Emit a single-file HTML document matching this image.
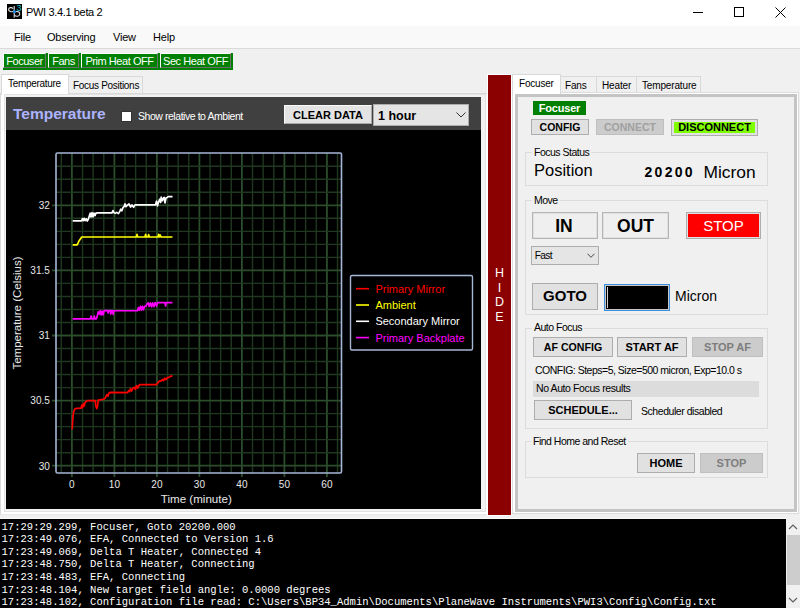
<!DOCTYPE html>
<html><head><meta charset="utf-8">
<style>
*{box-sizing:border-box;margin:0;padding:0}
html,body{width:800px;height:608px;overflow:hidden;background:#f0f0f0;font-family:"Liberation Sans",sans-serif;color:#000}
.a{position:absolute}
.t{position:absolute;white-space:pre;line-height:1}
.btn{position:absolute;background:#e1e1e1;border:1px solid #adadad}
.tbtn{position:absolute;background:#008000;top:53px;height:17px}
.tbtn i{position:absolute;left:0;top:0;right:2px;bottom:2px;border-top:1px solid #fff;border-left:1px solid #fff;border-right:1px solid #6d6d6d;border-bottom:1px solid #6d6d6d}
.tbtn span{position:absolute;top:3.3px;left:0;right:2px;text-align:center;color:#fff;font-size:11px;line-height:1;white-space:pre;letter-spacing:-0.45px}
.grp{position:absolute;border:1px solid #dcdcdc}
.gl{position:absolute;background:#f0f0f0;font-size:10.5px;line-height:1;padding:0 2px;white-space:pre;letter-spacing:-0.5px}
.c{text-align:center}
</style></head><body>
<!-- title bar -->
<div class="a" style="left:0;top:0;width:800px;height:26px;background:#fff"></div>
<svg class="a" style="left:7px;top:4px" width="15" height="15" viewBox="0 0 15 15">
<rect x="0" y="0" width="15" height="15" fill="#000"/>
<path d="M7.2 2 V13.8" stroke="#e0e0e0" stroke-width="1.1" fill="none"/>
<path d="M7.2 6.8 C6 8.2, 1.6 8.2, 1.6 5.6 C1.6 3.3, 4.6 3, 6.2 4.6" stroke="#e0e0e0" stroke-width="1.1" fill="none"/>
<path d="M7.4 8.4 C9 7, 13 7.3, 12.8 10 C12.6 12.6, 9 12.8, 7.4 11.2" stroke="#e0e0e0" stroke-width="1.1" fill="none"/>
<path d="M7.4 5.6 L9.3 7.5 L7.4 9.4 L5.5 7.5 Z" fill="#1f86e0"/>
<text x="9.5" y="6.8" font-size="9" fill="#20c8d8" font-family="Liberation Sans">3</text>
</svg>
<div class="t" style="left:26px;top:7.2px;font-size:11px;letter-spacing:-0.35px;color:#000">PWI 3.4.1 beta 2</div>
<div class="a" style="left:693px;top:12px;width:10px;height:1px;background:#000"></div>
<div class="a" style="left:734px;top:7px;width:10px;height:10px;border:1px solid #000"></div>
<svg class="a" style="left:775px;top:7px" width="11" height="11" viewBox="0 0 11 11"><path d="M0.5 0.5 L10.5 10.5 M10.5 0.5 L0.5 10.5" stroke="#000" stroke-width="1"/></svg>
<!-- menu bar -->
<div class="a" style="left:0;top:26px;width:800px;height:23px;background:#f9f9f9;border-bottom:1px solid #dadada"></div>
<div class="t" style="left:14px;top:31.5px;font-size:11px;letter-spacing:-0.2px">File</div>
<div class="t" style="left:47px;top:31.5px;font-size:11px;letter-spacing:-0.2px">Observing</div>
<div class="t" style="left:113px;top:31.5px;font-size:11px;letter-spacing:-0.2px">View</div>
<div class="t" style="left:153px;top:31.5px;font-size:11px;letter-spacing:-0.2px">Help</div>
<!-- toolbar -->
<div class="tbtn" style="left:3px;width:45px"><i></i><span>Focuser</span></div>
<div class="tbtn" style="left:48px;width:33px"><i></i><span>Fans</span></div>
<div class="tbtn" style="left:81px;width:79px"><i></i><span>Prim Heat OFF</span></div>
<div class="tbtn" style="left:160px;width:73px"><i></i><span>Sec Heat OFF</span></div>

<!-- left tab control -->
<div class="a" style="left:68px;top:76px;width:75px;height:18px;background:#f0f0f0;border:1px solid #d9d9d9;border-bottom:none"></div>
<div class="t" style="left:73px;top:81px;font-size:10px;letter-spacing:-0.3px">Focus Positions</div>
<div class="a" style="left:0;top:93px;width:488px;height:422px;background:#fff;border-left:1px solid #d9d9d9;border-top:1px solid #d9d9d9;border-bottom:1px solid #e8e8e8"></div>
<div class="a" style="left:1px;top:74px;width:68px;height:21px;background:#fff;border:1px solid #d9d9d9;border-bottom:none"></div>
<div class="t" style="left:8px;top:79px;font-size:10px;letter-spacing:-0.3px">Temperature</div>
<div class="a" style="left:4px;top:94px;width:482px;height:418px;border:1px solid #e2e2e2;background:#f2f2f2"></div>
<div class="a" style="left:6px;top:97px;width:475px;height:33px;background:#404040"></div>
<div class="a" style="left:6px;top:130px;width:475px;height:379px;background:#000"></div>
<div class="t" style="left:13px;top:106.2px;font-size:15.5px;font-weight:bold;color:#acb4ff;letter-spacing:0px">Temperature</div>
<div class="a" style="left:121px;top:111px;width:11px;height:11px;background:#fff;border:1px solid #333"></div>
<div class="t" style="left:138px;top:111.4px;font-size:10.5px;letter-spacing:-0.45px;color:#fff">Show relative to Ambient</div>
<div class="btn" style="left:284px;top:105px;width:88px;height:19px;background:#e3e3e3;border-color:#fafafa #a8a8a8 #a8a8a8 #fafafa"></div>
<div class="t" style="left:284px;top:110px;width:88px;text-align:center;font-size:11px;font-weight:bold">CLEAR DATA</div>
<div class="a" style="left:373px;top:104px;width:96px;height:22px;background:#e5e5e5;border:1px solid #adadad"></div>
<div class="t" style="left:378px;top:110px;font-size:12.5px;font-weight:bold">1 hour</div>
<svg class="a" style="left:456px;top:112px" width="10" height="6" viewBox="0 0 10 6"><path d="M0.5 0.5 L5 5 L9.5 0.5" stroke="#333" stroke-width="1" fill="none"/></svg>

<!-- HIDE bar -->
<div class="a" style="left:487px;top:74px;width:25px;height:442px;background:#fff"></div>
<div class="a" style="left:488px;top:75px;width:23px;height:440px;background:#8b0000"></div>
<div class="t c" style="left:488px;top:266px;width:23px;font-size:12.5px;color:#fff;line-height:14.5px;white-space:normal">H<br>I<br>D<br>E</div>

<!-- right tab control -->
<div class="a" style="left:560px;top:76px;width:37px;height:18px;background:#f0f0f0;border:1px solid #d9d9d9;border-bottom:none"></div>
<div class="a" style="left:596px;top:76px;width:41px;height:18px;background:#f0f0f0;border:1px solid #d9d9d9;border-bottom:none"></div>
<div class="a" style="left:636px;top:76px;width:65px;height:18px;background:#f0f0f0;border:1px solid #d9d9d9;border-bottom:none"></div>
<div class="t" style="left:565px;top:81px;font-size:10px;letter-spacing:-0.15px">Fans</div>
<div class="t" style="left:602px;top:81px;font-size:10px;letter-spacing:-0.15px">Heater</div>
<div class="t" style="left:642px;top:81px;font-size:10px;letter-spacing:-0.15px">Temperature</div>
<div class="a" style="left:512px;top:92px;width:287px;height:422px;background:#fff;border:1px solid #dcdcdc"></div>
<div class="a" style="left:512px;top:74px;width:49px;height:21px;background:#fff;border:1px solid #d9d9d9;border-bottom:none"></div>
<div class="t" style="left:519px;top:79px;font-size:10px;letter-spacing:-0.2px">Focuser</div>
<div class="a" style="left:515px;top:94px;width:282px;height:418px;background:#f0f0f0;border:3px solid #c4c4c4"></div>

<!-- focuser content -->
<div class="a" style="left:533px;top:101px;width:53px;height:14px;background:#008000"></div>
<div class="t c" style="left:533px;top:103px;width:53px;font-size:11px;font-weight:bold;color:#fff;letter-spacing:-0.2px">Focuser</div>
<div class="btn" style="left:531px;top:119px;width:58px;height:16px"></div>
<div class="t c" style="left:531px;top:122px;width:58px;font-size:10.5px;font-weight:bold">CONFIG</div>
<div class="a" style="left:596px;top:119px;width:68px;height:16px;background:#cccccc;border:1px solid #bfbfbf"></div>
<div class="t c" style="left:596px;top:122px;width:68px;font-size:10.5px;font-weight:bold;color:#a0a0a0">CONNECT</div>
<div class="a" style="left:671px;top:119px;width:87px;height:17px;background:#e1e1e1;border:1px solid #adadad"></div>
<div class="a" style="left:674px;top:122px;width:81px;height:11px;background:#80ff00"></div>
<div class="t c" style="left:671px;top:122px;width:87px;font-size:11px;font-weight:bold">DISCONNECT</div>

<div class="grp" style="left:525px;top:152px;width:243px;height:34px"></div>
<div class="gl" style="left:532px;top:147px">Focus Status</div>
<div class="t" style="left:534px;top:162px;font-size:16.5px">Position</div>
<div class="t" style="left:644.5px;top:165px;font-size:14px;font-weight:bold;letter-spacing:2.3px">20200</div>
<div class="t" style="left:703.5px;top:163.6px;font-size:17.4px;letter-spacing:0px">Micron</div>

<div class="grp" style="left:525px;top:200px;width:243px;height:115px"></div>
<div class="gl" style="left:532px;top:195px">Move</div>
<div class="btn" style="left:532px;top:212px;width:66px;height:27px;background:#efefef;border-color:#b4b4b4;box-shadow:inset 0 0 0 1px #e0e0e0"></div>
<div class="t c" style="left:531px;top:218px;width:66px;font-size:17.5px;font-weight:bold">IN</div>
<div class="btn" style="left:602px;top:212px;width:67px;height:27px;background:#efefef;border-color:#b4b4b4;box-shadow:inset 0 0 0 1px #e0e0e0"></div>
<div class="t c" style="left:602px;top:218px;width:67px;font-size:17.5px;font-weight:bold">OUT</div>
<div class="a" style="left:686px;top:212px;width:75px;height:27px;background:#e1e1e1;border:1px solid #adadad"></div>
<div class="a" style="left:688px;top:214px;width:71px;height:23px;background:#ff0000"></div>
<div class="t c" style="left:686px;top:218.2px;width:75px;font-size:15px;color:#fff">STOP</div>
<div class="a" style="left:531px;top:246px;width:68px;height:19px;background:#e5e5e5;border:1px solid #adadad"></div>
<div class="t" style="left:534.8px;top:251px;font-size:10.2px;letter-spacing:-0.7px">Fast</div>
<svg class="a" style="left:587px;top:253px" width="8" height="5" viewBox="0 0 9 5"><path d="M0.5 0.5 L4.5 4.5 L8.5 0.5" stroke="#333" stroke-width="1" fill="none"/></svg>
<div class="btn" style="left:532px;top:283px;width:66px;height:27px"></div>
<div class="t c" style="left:532px;top:288.2px;width:66px;font-size:15px;font-weight:bold">GOTO</div>
<div class="a" style="left:604px;top:284px;width:66px;height:27px;background:#000;border:1px solid #3c8ce0;box-shadow:inset 0 0 0 1px #c8c8c8"></div><div class="a" style="left:607px;top:287px;width:1px;height:21px;background:#d0d0d0"></div>
<div class="t" style="left:675px;top:289.4px;font-size:14px">Micron</div>

<div class="grp" style="left:525px;top:328px;width:243px;height:101px"></div>
<div class="gl" style="left:532px;top:322px">Auto Focus</div>
<div class="btn" style="left:533px;top:337px;width:80px;height:20px"></div>
<div class="t c" style="left:533px;top:342px;width:80px;font-size:10.6px;font-weight:bold">AF CONFIG</div>
<div class="btn" style="left:617px;top:337px;width:70px;height:20px"></div>
<div class="t c" style="left:617px;top:342px;width:70px;font-size:11px;font-weight:bold">START AF</div>
<div class="a" style="left:692px;top:337px;width:71px;height:20px;background:#cccccc;border:1px solid #bfbfbf"></div>
<div class="t c" style="left:692px;top:342px;width:71px;font-size:11px;font-weight:bold;color:#7d7d7d">STOP AF</div>
<div class="t" style="left:535px;top:365.4px;font-size:10.5px;letter-spacing:-0.5px">CONFIG: Steps=5, Size=500 micron, Exp=10.0 s</div>
<div class="a" style="left:533px;top:381px;width:226px;height:16px;background:#dcdcdc"></div>
<div class="t" style="left:536px;top:383px;font-size:10.5px;letter-spacing:-0.4px">No Auto Focus results</div>
<div class="btn" style="left:534px;top:400px;width:98px;height:20px"></div>
<div class="t c" style="left:534px;top:405px;width:98px;font-size:11px;font-weight:bold">SCHEDULE...</div>
<div class="t" style="left:641px;top:406px;font-size:10.5px;letter-spacing:-0.45px">Scheduler disabled</div>

<div class="grp" style="left:525px;top:441px;width:243px;height:37px"></div>
<div class="gl" style="left:531px;top:436px">Find Home and Reset</div>
<div class="btn" style="left:637px;top:453px;width:58px;height:20px"></div>
<div class="t c" style="left:637px;top:458px;width:58px;font-size:11px;font-weight:bold">HOME</div>
<div class="a" style="left:700px;top:453px;width:63px;height:20px;background:#cccccc;border:1px solid #bfbfbf"></div>
<div class="t c" style="left:700px;top:458px;width:63px;font-size:11px;font-weight:bold;color:#7d7d7d">STOP</div>

<!-- log -->
<div class="a" style="left:0;top:518px;width:786px;height:1px;background:#fafafa"></div><div class="a" style="left:0;top:519px;width:786px;height:89px;background:#000"></div>
<div class="a" style="left:1.5px;top:520.6px;font-family:'Liberation Mono',monospace;font-size:10.56px;line-height:12.6px;color:#fff;white-space:pre">17:29:29.299, Focuser, Goto 20200.000
17:23:49.076, EFA, Connected to Version 1.6
17:23:49.069, Delta T Heater, Connected 4
17:23:48.750, Delta T Heater, Connecting
17:23:48.483, EFA, Connecting
17:23:48.104, New target field angle: 0.0000 degrees
17:23:48.102, Configuration file read: C:\Users\BP34_Admin\Documents\PlaneWave Instruments\PWI3\Config\Config.txt</div>
<div class="a" style="left:786px;top:518px;width:14px;height:90px;background:#f0f0f0"></div>
<div class="a" style="left:787px;top:535px;width:13px;height:50px;background:#cdcdcd"></div>
<svg class="a" style="left:788px;top:524px" width="10" height="6" viewBox="0 0 10 6"><path d="M1 5 L5 1 L9 5" stroke="#606060" stroke-width="1.2" fill="none"/></svg>
<svg class="a" style="left:788px;top:597px" width="10" height="6" viewBox="0 0 10 6"><path d="M1 1 L5 5 L9 1" stroke="#606060" stroke-width="1.2" fill="none"/></svg>

<!-- chart -->
<svg class="a" style="left:6px;top:130px" width="475" height="379" viewBox="6 130 475 379" id="chart">
<line x1="61.28" y1="153.0" x2="61.28" y2="473.0" stroke="#1f381f" stroke-width="1.4"/>
<line x1="71.90" y1="153.0" x2="71.90" y2="477.0" stroke="#2b4d2b" stroke-width="1.8"/>
<line x1="82.53" y1="153.0" x2="82.53" y2="473.0" stroke="#1f381f" stroke-width="1.4"/>
<line x1="93.15" y1="153.0" x2="93.15" y2="473.0" stroke="#1f381f" stroke-width="1.4"/>
<line x1="103.78" y1="153.0" x2="103.78" y2="473.0" stroke="#1f381f" stroke-width="1.4"/>
<line x1="114.40" y1="153.0" x2="114.40" y2="477.0" stroke="#2b4d2b" stroke-width="1.8"/>
<line x1="125.03" y1="153.0" x2="125.03" y2="473.0" stroke="#1f381f" stroke-width="1.4"/>
<line x1="135.65" y1="153.0" x2="135.65" y2="473.0" stroke="#1f381f" stroke-width="1.4"/>
<line x1="146.28" y1="153.0" x2="146.28" y2="473.0" stroke="#1f381f" stroke-width="1.4"/>
<line x1="156.90" y1="153.0" x2="156.90" y2="477.0" stroke="#2b4d2b" stroke-width="1.8"/>
<line x1="167.53" y1="153.0" x2="167.53" y2="473.0" stroke="#1f381f" stroke-width="1.4"/>
<line x1="178.15" y1="153.0" x2="178.15" y2="473.0" stroke="#1f381f" stroke-width="1.4"/>
<line x1="188.78" y1="153.0" x2="188.78" y2="473.0" stroke="#1f381f" stroke-width="1.4"/>
<line x1="199.40" y1="153.0" x2="199.40" y2="477.0" stroke="#2b4d2b" stroke-width="1.8"/>
<line x1="210.03" y1="153.0" x2="210.03" y2="473.0" stroke="#1f381f" stroke-width="1.4"/>
<line x1="220.65" y1="153.0" x2="220.65" y2="473.0" stroke="#1f381f" stroke-width="1.4"/>
<line x1="231.28" y1="153.0" x2="231.28" y2="473.0" stroke="#1f381f" stroke-width="1.4"/>
<line x1="241.90" y1="153.0" x2="241.90" y2="477.0" stroke="#2b4d2b" stroke-width="1.8"/>
<line x1="252.53" y1="153.0" x2="252.53" y2="473.0" stroke="#1f381f" stroke-width="1.4"/>
<line x1="263.15" y1="153.0" x2="263.15" y2="473.0" stroke="#1f381f" stroke-width="1.4"/>
<line x1="273.77" y1="153.0" x2="273.77" y2="473.0" stroke="#1f381f" stroke-width="1.4"/>
<line x1="284.40" y1="153.0" x2="284.40" y2="477.0" stroke="#2b4d2b" stroke-width="1.8"/>
<line x1="295.02" y1="153.0" x2="295.02" y2="473.0" stroke="#1f381f" stroke-width="1.4"/>
<line x1="305.65" y1="153.0" x2="305.65" y2="473.0" stroke="#1f381f" stroke-width="1.4"/>
<line x1="316.27" y1="153.0" x2="316.27" y2="473.0" stroke="#1f381f" stroke-width="1.4"/>
<line x1="326.90" y1="153.0" x2="326.90" y2="477.0" stroke="#2b4d2b" stroke-width="1.8"/>
<line x1="337.52" y1="153.0" x2="337.52" y2="473.0" stroke="#1f381f" stroke-width="1.4"/>
<line x1="52.0" y1="465.70" x2="341.5" y2="465.70" stroke="#2b4d2b" stroke-width="1.8"/>
<line x1="56.0" y1="452.68" x2="341.5" y2="452.68" stroke="#1f381f" stroke-width="1.4"/>
<line x1="56.0" y1="439.66" x2="341.5" y2="439.66" stroke="#1f381f" stroke-width="1.4"/>
<line x1="56.0" y1="426.64" x2="341.5" y2="426.64" stroke="#1f381f" stroke-width="1.4"/>
<line x1="56.0" y1="413.62" x2="341.5" y2="413.62" stroke="#1f381f" stroke-width="1.4"/>
<line x1="52.0" y1="400.60" x2="341.5" y2="400.60" stroke="#2b4d2b" stroke-width="1.8"/>
<line x1="56.0" y1="387.58" x2="341.5" y2="387.58" stroke="#1f381f" stroke-width="1.4"/>
<line x1="56.0" y1="374.56" x2="341.5" y2="374.56" stroke="#1f381f" stroke-width="1.4"/>
<line x1="56.0" y1="361.54" x2="341.5" y2="361.54" stroke="#1f381f" stroke-width="1.4"/>
<line x1="56.0" y1="348.52" x2="341.5" y2="348.52" stroke="#1f381f" stroke-width="1.4"/>
<line x1="52.0" y1="335.50" x2="341.5" y2="335.50" stroke="#2b4d2b" stroke-width="1.8"/>
<line x1="56.0" y1="322.48" x2="341.5" y2="322.48" stroke="#1f381f" stroke-width="1.4"/>
<line x1="56.0" y1="309.46" x2="341.5" y2="309.46" stroke="#1f381f" stroke-width="1.4"/>
<line x1="56.0" y1="296.44" x2="341.5" y2="296.44" stroke="#1f381f" stroke-width="1.4"/>
<line x1="56.0" y1="283.42" x2="341.5" y2="283.42" stroke="#1f381f" stroke-width="1.4"/>
<line x1="52.0" y1="270.40" x2="341.5" y2="270.40" stroke="#2b4d2b" stroke-width="1.8"/>
<line x1="56.0" y1="257.38" x2="341.5" y2="257.38" stroke="#1f381f" stroke-width="1.4"/>
<line x1="56.0" y1="244.36" x2="341.5" y2="244.36" stroke="#1f381f" stroke-width="1.4"/>
<line x1="56.0" y1="231.34" x2="341.5" y2="231.34" stroke="#1f381f" stroke-width="1.4"/>
<line x1="56.0" y1="218.32" x2="341.5" y2="218.32" stroke="#1f381f" stroke-width="1.4"/>
<line x1="52.0" y1="205.30" x2="341.5" y2="205.30" stroke="#2b4d2b" stroke-width="1.8"/>
<line x1="56.0" y1="192.28" x2="341.5" y2="192.28" stroke="#1f381f" stroke-width="1.4"/>
<line x1="56.0" y1="179.26" x2="341.5" y2="179.26" stroke="#1f381f" stroke-width="1.4"/>
<line x1="56.0" y1="166.24" x2="341.5" y2="166.24" stroke="#1f381f" stroke-width="1.4"/>
<rect x="56.0" y="153.0" width="285.5" height="320.0" rx="1.5" fill="none" stroke="#a6b6d6" stroke-width="1.6"/>
<text x="49.8" y="469.5" text-anchor="end" font-size="10" fill="#e8e8e8" font-family="Liberation Sans">30</text>
<text x="49.8" y="404.4" text-anchor="end" font-size="10" fill="#e8e8e8" font-family="Liberation Sans">30.5</text>
<text x="49.8" y="339.3" text-anchor="end" font-size="10" fill="#e8e8e8" font-family="Liberation Sans">31</text>
<text x="49.8" y="274.2" text-anchor="end" font-size="10" fill="#e8e8e8" font-family="Liberation Sans">31.5</text>
<text x="49.8" y="209.1" text-anchor="end" font-size="10" fill="#e8e8e8" font-family="Liberation Sans">32</text>
<text x="71.9" y="487.5" text-anchor="middle" font-size="10" fill="#e8e8e8" font-family="Liberation Sans">0</text>
<text x="114.4" y="487.5" text-anchor="middle" font-size="10" fill="#e8e8e8" font-family="Liberation Sans">10</text>
<text x="156.9" y="487.5" text-anchor="middle" font-size="10" fill="#e8e8e8" font-family="Liberation Sans">20</text>
<text x="199.4" y="487.5" text-anchor="middle" font-size="10" fill="#e8e8e8" font-family="Liberation Sans">30</text>
<text x="241.9" y="487.5" text-anchor="middle" font-size="10" fill="#e8e8e8" font-family="Liberation Sans">40</text>
<text x="284.4" y="487.5" text-anchor="middle" font-size="10" fill="#e8e8e8" font-family="Liberation Sans">50</text>
<text x="326.9" y="487.5" text-anchor="middle" font-size="10" fill="#e8e8e8" font-family="Liberation Sans">60</text>
<text x="196.3" y="502.6" text-anchor="middle" font-size="11.6" fill="#e8e8e8" font-family="Liberation Sans">Time (minute)</text>
<text transform="translate(21.4 313) rotate(-90)" text-anchor="middle" font-size="11.5" fill="#e8e8e8" font-family="Liberation Sans">Temperature (Celsius)</text>
<polyline fill="none" stroke="#ffff00" stroke-width="1.7" stroke-linejoin="round" points="72.7,244.8 77.2,244.8 79,241 81.75,237 136.2,237 137,234.4 137.8,237 145,237 145.6,234.4 146.4,237 148,237 148.6,234.6 149.4,237 158,237 158.6,234.4 159.4,237 160.2,235 161,237 172.5,237"/>
<polyline fill="none" stroke="#ffffff" stroke-width="1.7" stroke-linejoin="round" points="72.7,220.8 81.6,220.8 82.5,218.6 83.3,220.6 84.2,218.4 85.2,220.6 86.2,218.8 87.2,221 88.3,219.2 89.3,216 90.2,213.2 91,217 92,212.6 93,216.8 94,213 95,215.6 96,213.2 97.75,212.9 112,212.9 113,210.6 114,212.6 115.2,213.4 116.6,212.4 118.4,213.6 119.8,211.4 120.8,209.2 121.8,210.8 123,207.6 124.2,206.4 125,203.8 126,206.6 127.2,205.4 129,204 130.6,207 132,205 133.6,207.4 135,204.9 155.5,204.9 156.5,201.2 157.5,205.8 158.6,201.8 159.6,199.2 160.6,202.4 161.2,197.2 162.4,200.8 163.2,198.6 164.2,197.4 165,202.8 166,198 167.2,197.4 168.2,196.6 172.5,196.6"/>
<polyline fill="none" stroke="#ff00ff" stroke-width="1.7" stroke-linejoin="round" points="72.7,318.8 90.6,318.8 91.2,316 91.8,318.8 93.8,318.8 94.3,316 94.8,318.8 96.2,318.8 97.2,316.4 98.2,311.9 99.2,314.2 100.2,310.8 101.2,315 102.2,311 103.2,314.8 104.2,310.6 107.6,310.6 108.2,313 108.8,310.6 110.2,310.6 110.8,314 111.4,310.6 112.6,310.6 113.2,314.4 113.8,310.75 137.5,310.75 138.4,307.6 139.4,310.2 140.4,306.4 141.4,310 142.4,306.4 143.4,309.8 144.6,306.4 146,306 147,304 148.2,302.8 149.2,306.4 150.4,303 151.6,306.8 152.6,302.8 154,306.6 155.2,302.6 156.6,306 157.6,302.6 165,302.6 165.6,306 166.2,302.65 172.5,302.65"/>
<polyline fill="none" stroke="#ff0000" stroke-width="1.7" stroke-linejoin="round" points="72.2,429.2 72.8,418 73.6,412 74.8,409 76.5,408.4 81,408.2 81.8,405 82.6,407.6 83.4,403.6 84.2,406 85,402.6 86,401.6 88,400.6 95.2,400.6 95.8,406 96.8,408.6 97.6,406 98.2,400.2 103,399.4 105,398.4 106.2,396 107.2,394.6 108,396.2 109,393 110,392.4 127.5,392.6 128.6,390.6 129.6,391.6 130.6,388.6 131.6,391 133,388 134.4,387.4 135.4,389.4 136.6,385.6 137.6,388 139.5,384.6 156.6,384.6 158,382.6 159.6,380.8 161,381.2 162.4,379.4 163.6,380.6 164.8,378.2 166,379.6 167.4,377.6 169,377.4 170.5,376.4 172.5,375.8"/>
<rect x="350.5" y="275.5" width="122" height="74.5" rx="1.5" fill="#000" stroke="#a6b6d6" stroke-width="1.4"/>
<line x1="356" y1="288.7" x2="369" y2="288.7" stroke="#ff0000" stroke-width="1.6"/>
<text x="375.4" y="292.6" font-size="11" fill="#ff0000" font-family="Liberation Sans">Primary Mirror</text>
<line x1="356" y1="305.0" x2="369" y2="305.0" stroke="#ffff00" stroke-width="1.6"/>
<text x="375.4" y="308.9" font-size="11" fill="#ffff00" font-family="Liberation Sans">Ambient</text>
<line x1="356" y1="321.3" x2="369" y2="321.3" stroke="#ffffff" stroke-width="1.6"/>
<text x="375.4" y="325.2" font-size="11" fill="#ffffff" font-family="Liberation Sans">Secondary Mirror</text>
<line x1="356" y1="337.6" x2="369" y2="337.6" stroke="#ff00ff" stroke-width="1.6"/>
<text x="375.4" y="341.5" font-size="11" fill="#ff00ff" font-family="Liberation Sans">Primary Backplate</text>
</svg>
</body></html>
